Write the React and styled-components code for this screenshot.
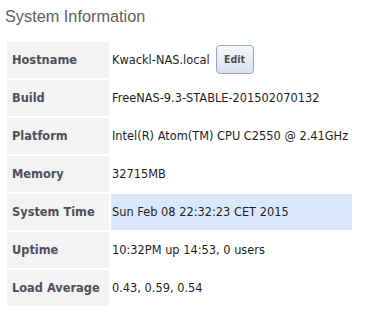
import React from "react";
import styled, { createGlobalStyle } from "styled-components";

const Global = createGlobalStyle`
  html, body { margin: 0; padding: 0; background: #fff; }
  body { font-family: "DejaVu Sans", Verdana, sans-serif; }
`;

const Page = styled.div`
  padding: 6px 0 0 5px;
  width: 349px;
`;

const Title = styled.h2`
  margin: 0 0 14px 0;
  font-family: "Liberation Sans", Arial, sans-serif;
  font-weight: normal;
  font-size: 16.3px;
  line-height: 20px;
  color: #616161;
`;

const Table = styled.div`
  display: grid;
  grid-template-columns: 102px 241px;
  grid-auto-rows: 36px;
  gap: 2px;
  padding: 2px;
`;

const Label = styled.div`
  display: flex;
  align-items: center;
  padding-left: 5px;
  background: #f3f3f3;
  font-size: 11.4px;
  font-weight: bold;
  color: #4f4f5b;
  white-space: nowrap;
`;

const Value = styled.div`
  display: flex;
  align-items: center;
  gap: 6px;
  padding-left: 1px;
  background: ${(p) => (p.$highlight ? "#dbe8fb" : "transparent")};
  font-size: 11.4px;
  color: #1e1e1e;
  white-space: nowrap;
`;

const EditButton = styled.button`
  width: 38px;
  height: 29px;
  margin-top: -1px;
  padding: 0 0 1px 0;
  border: 1px solid #97a7c0;
  border-radius: 4px;
  background: linear-gradient(#f5f8fc, #d8e2f0);
  box-shadow: inset 0 1px 0 #fff;
  font-family: "DejaVu Sans Condensed", "DejaVu Sans", Tahoma, sans-serif;
  font-weight: bold;
  font-size: 10.5px;
  color: #505050;
  cursor: pointer;
`;

const rows = [
  ["Build", "FreeNAS-9.3-STABLE-201502070132"],
  ["Platform", "Intel(R) Atom(TM) CPU C2550 @ 2.41GHz"],
  ["Memory", "32715MB"],
  ["System Time", "Sun Feb 08 22:32:23 CET 2015", true],
  ["Uptime", "10:32PM up 14:53, 0 users"],
  ["Load Average", "0.43, 0.59, 0.54"],
];

export default function App() {
  return (
    <>
      <Global />
      <Page>
        <Title>System Information</Title>
        <Table>
          <Label>Hostname</Label>
          <Value>
            <span>Kwackl-NAS.local</span>
            <EditButton>Edit</EditButton>
          </Value>
          {rows.map(([k, v, h]) => (
            <React.Fragment key={k}>
              <Label>{k}</Label>
              <Value $highlight={h}>{v}</Value>
            </React.Fragment>
          ))}
        </Table>
      </Page>
    </>
  );
}
